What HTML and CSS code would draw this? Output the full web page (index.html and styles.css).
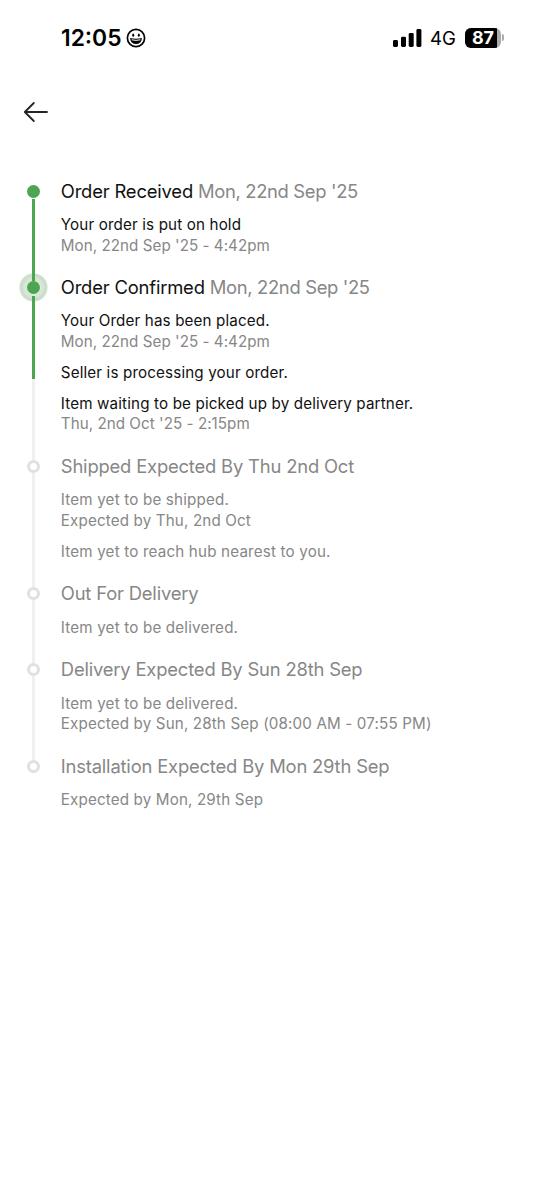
FILE: index.html
```html
<!DOCTYPE html>
<html lang="en">
<head>
<meta charset="utf-8">
<title>Order tracking</title>
<link rel="stylesheet" href="styles.css">
</head>
<body>
<header class="status">
  <span class="clock">12:05</span>
  <svg class="smile" width="20" height="20" viewBox="0 0 20 20" fill="none" stroke="#000">
    <circle cx="10" cy="10" r="8.6" stroke-width="1.7"/>
    <ellipse cx="7.2" cy="7.2" rx="1" ry="1.6" fill="#000" stroke="none"/>
    <ellipse cx="12.8" cy="7.2" rx="1" ry="1.6" fill="#000" stroke="none"/>
    <path d="M4 10Q10 11.5 16 10Q15.3 16 10 16T4 10Z" fill="#000" stroke="none"/>
    <path d="M5.6 11.8Q10 12.9 14.4 11.8" stroke="#fff" stroke-width="1"/>
  </svg>
  <svg class="signal" width="29" height="18" viewBox="0 0 29 18">
    <rect x="0" y="11" width="5" height="7" rx="1.4"/>
    <rect x="8" y="7.7" width="5" height="10.3" rx="1.4"/>
    <rect x="15.7" y="4" width="5" height="14" rx="1.4"/>
    <rect x="23.4" y="0" width="5" height="18" rx="1.4"/>
  </svg>
  <span class="network">4G</span>
  <span class="battery"><span class="charge">87</span></span>
  <span class="cap"></span>
</header>
<nav class="nav">
  <svg width="26" height="22" viewBox="0 0 26 22" fill="none" stroke="#252525" stroke-width="1.8" stroke-linecap="round" stroke-linejoin="round"><path d="M24 11H2M10.8 2L1.8 11L10.8 20"/></svg>
</nav>
<main class="timeline">
  <section class="step done">
    <h2>Order Received <span>Mon, 22nd Sep '25</span></h2>
    <div class="event"><p>Your order is put on hold</p><p class="date">Mon, 22nd Sep '25 - 4:42pm</p></div>
  </section>
  <section class="step done current">
    <h2>Order Confirmed <span>Mon, 22nd Sep '25</span></h2>
    <div class="event"><p>Your Order has been placed.</p><p class="date">Mon, 22nd Sep '25 - 4:42pm</p></div>
    <div class="event"><p>Seller is processing your order.</p></div>
    <div class="event"><p>Item waiting to be picked up by delivery partner.</p><p class="date">Thu, 2nd Oct '25 - 2:15pm</p></div>
  </section>
  <section class="step">
    <h2>Shipped Expected By Thu 2nd Oct</h2>
    <div class="event"><p>Item yet to be shipped.</p><p class="due">Expected by Thu, 2nd Oct</p></div>
    <div class="event"><p>Item yet to reach hub nearest to you.</p></div>
  </section>
  <section class="step">
    <h2>Out For Delivery</h2>
    <div class="event"><p>Item yet to be delivered.</p></div>
  </section>
  <section class="step">
    <h2>Delivery Expected By Sun 28th Sep</h2>
    <div class="event"><p>Item yet to be delivered.</p><p class="due">Expected by Sun, 28th Sep (08:00 AM - 07:55 PM)</p></div>
  </section>
  <section class="step">
    <h2>Installation Expected By Mon 29th Sep</h2>
    <div class="event"><p class="due">Expected by Mon, 29th Sep</p></div>
  </section>
</main>
</body>
</html>
```
FILE: styles.css
```css
*, *::before, *::after { box-sizing: border-box; }
body { margin: 0; min-height: 1200px; background: #fff; font-family: Inter, "Liberation Sans", sans-serif; color: #111; }
h2, p { margin: 0; font-weight: 400; white-space: nowrap; }
.status { display: flex; align-items: center; height: 75px; padding: 0 50px 0 61px; color: #000; }
.clock { font-size: 22.8px; font-weight: 600; width: 65px; white-space: nowrap; }
.signal { margin-left: auto; }
.network { font-size: 18.6px; margin-left: 8px; width: 27px; white-space: nowrap; }
.battery { margin-left: 8px; width: 36px; height: 20px; border-radius: 6px; overflow: hidden; background: #aaa; }
.charge { display: block; width: 32px; height: 20px; padding-left: 4px; background: #000; color: #fff; font-size: 18px; font-weight: 700; line-height: 20px; text-align: center; }
.cap { width: 2px; height: 7px; margin-left: 1px; border-radius: 0 3px 3px 0; background: #aaa; }
.nav { height: 103.6px; padding: 26px 0 0 23px; }
.step { position: relative; padding: 0 0 18.9px 60.8px; color: #878787; }
.step h2 { font-size: 18.4px; line-height: 24.7px; margin-bottom: 11.7px; letter-spacing: -.18px; }
.step h2 span { letter-spacing: -.33px; }
.event { font-size: 15.2px; line-height: 20.6px; letter-spacing: .17px; }
.event + .event { margin-top: 10.3px; }
.done { color: #111; }
.done .event { letter-spacing: .14px; }
.done h2 span, .done .date { color: #878787; }
.done .date { letter-spacing: .04px; }
.due { letter-spacing: .14px; }
.step::before { content: ""; position: absolute; left: 27px; top: 6px; width: 13px; height: 13px; border: 3px solid #e0e0e0; border-radius: 50%; background: #fff; z-index: 2; }
.step::after { content: ""; position: absolute; left: 32px; top: 19px; bottom: -6px; width: 3px; background: #f0f0f0; z-index: 1; }
.step:last-child::after { display: none; }
.done::before { border: 0; background: #4ca64f; }
.done::after { top: 20px; background: #4ca64f; }
.current::before { box-shadow: 0 0 0 1px #dfeade, 0 0 0 4px #d8e6d7, 0 0 0 7.5px #cbdfca; z-index: 0; }
.current::after { top: 19px; background: linear-gradient(#dfeade 2px, #4ca64f 2px, #4ca64f 85px, #f0f0f0 85px); }
```
